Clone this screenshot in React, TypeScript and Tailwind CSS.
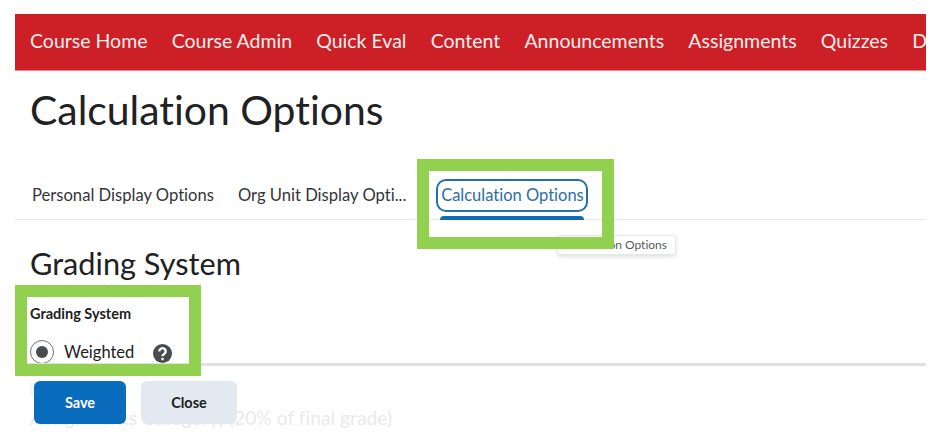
const navItems = ["Course Home", "Course Admin", "Quick Eval", "Content", "Announcements", "Assignments", "Quizzes", "Discussions"];

function HelpIcon() {
  return (
    <svg viewBox="0 0 18 18" className="w-[19px] h-[19px] shrink-0">
      <circle cx="9" cy="9" r="9" fill="#494c4e" />
      <path d="M6 7a3 3 0 1 1 4.600 2.500C9.600 10.100 9 10.500 9 11.500" fill="none" stroke="#fff" strokeWidth="2.200" />
      <circle cx="9" cy="14.300" r="1.300" fill="#fff" />
    </svg>
  );
}

export default function App() {
  return (
    <div className="relative w-[934px] h-[438px] overflow-hidden bg-white font-['Lato',sans-serif] [font-variant-ligatures:none] text-[#202122] pt-[14px] pl-[15px] pr-[8px]">
      <nav className="h-[57px] pb-[3px] bg-[#cd2026] border-b border-[#e9868a] flex items-center gap-[24.200px] pl-[15px] overflow-hidden text-[19.500px] text-[#fbeeee] whitespace-nowrap">
        {navItems.map((item) => (
          <span key={item}>{item}</span>
        ))}
      </nav>

      <h1 className="ml-[15px] mt-[14px] text-[40.900px] leading-[50px] font-normal">Calculation Options</h1>

      <div className="mt-[25px] h-[60px] border-b border-[#e6e7e8] flex items-start pl-[17px] text-[16.600px] text-[#34363a] whitespace-nowrap">
        <span className="mt-[23px]">Personal Display Options</span>
        <span className="mt-[23px] ml-[24px]">Org Unit Display Opti...</span>
        <div className="ml-[30px] mt-[19px] w-[152px] flex flex-col items-center">
          <span className="w-[152px] h-[33px] border-2 border-[#2470ad] rounded-[10px] flex items-center justify-center text-[16.500px] text-[#2c6ea8]">Calculation Options</span>
          <span className="mt-[4px] w-[144px] h-[4px] bg-[#0f6cb0] rounded-t-[4px]" />
        </div>
      </div>

      <h2 className="ml-[15px] mt-[24px] text-[30.700px] leading-[40px] font-normal">Grading System</h2>

      <div className="ml-[15px] mt-[21px] text-[14.500px] leading-[18px] font-bold">Grading System</div>
      <div className="ml-[15px] mt-[17px] flex items-center text-[16.500px] leading-[24px]">
        <span className="w-[24px] h-[24px] rounded-full border border-[#6e7376] flex items-center justify-center">
          <span className="w-[12px] h-[12px] rounded-full bg-[#494c4e]" />
        </span>
        <span className="ml-[10px]">Weighted</span>
        <span className="ml-[19px] mt-[3px]"><HelpIcon /></span>
      </div>

      <div className="absolute left-[30px] top-[383px] w-[14px] h-[13px] bg-[#f1f2f3]" />
      <div className="absolute left-[30px] top-[405px] text-[19.300px] leading-[26px] text-[#dfe1e3] whitespace-nowrap">Assignments Category) (20% of final grade)</div>

      <div className="absolute left-[15px] right-[8px] top-[363px] h-[71px] border-t-[3px] border-[#dfe1e2] bg-white/30 flex items-start gap-[15px] pl-[19px] pt-[15px] text-[14.500px] font-bold">
        <button className="w-[92px] h-[43px] rounded-[6px] bg-[#0a6cbc] text-white">Save</button>
        <button className="w-[96px] h-[43px] rounded-[6px] bg-[#e3e9f1] text-[#202122]">Close</button>
      </div>

      <div className="absolute left-[557px] top-[235px] w-[119px] h-[20px] bg-white border border-[#e6e7e8] rounded-[2px] shadow-[0_2px_4px_rgba(0,0,0,0.12)] text-[12px] leading-[18px] text-[#565a5c] text-right pr-[8px] whitespace-nowrap">Calculation Options</div>

      <div className="absolute left-[417px] top-[159px] w-[197px] h-[90px] border-[12px] border-[#92d050]" />
      <div className="absolute left-[15px] top-[285px] w-[186px] h-[91px] border-[12px] border-[#92d050]" />
    </div>
  );
}
